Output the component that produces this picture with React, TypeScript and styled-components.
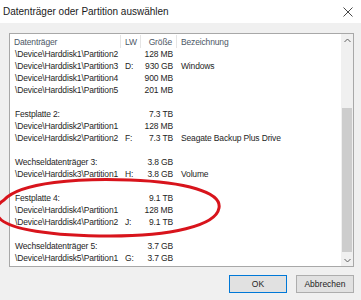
import styled, { createGlobalStyle } from "styled-components";

type Row = {
  name?: string;
  drive?: string;
  size?: string;
  label?: string;
};

const ROWS: Array<Row> = [
  { name: "\\Device\\Harddisk1\\Partition2", size: "128 MB" },
  { name: "\\Device\\Harddisk1\\Partition3", drive: "D:", size: "930 GB", label: "Windows" },
  { name: "\\Device\\Harddisk1\\Partition4", size: "900 MB" },
  { name: "\\Device\\Harddisk1\\Partition5", size: "201 MB" },
  {},
  { name: "Festplatte 2:", size: "7.3 TB" },
  { name: "\\Device\\Harddisk2\\Partition1", size: "128 MB" },
  { name: "\\Device\\Harddisk2\\Partition2", drive: "F:", size: "7.3 TB", label: "Seagate Backup Plus Drive" },
  {},
  { name: "Wechseldatenträger 3:", size: "3.8 GB" },
  { name: "\\Device\\Harddisk3\\Partition1", drive: "H:", size: "3.8 GB", label: "Volume" },
  {},
  { name: "Festplatte 4:", size: "9.1 TB" },
  { name: "\\Device\\Harddisk4\\Partition1", size: "128 MB" },
  { name: "\\Device\\Harddisk4\\Partition2", drive: "J:", size: "9.1 TB" },
  {},
  { name: "Wechseldatenträger 5:", size: "3.7 GB" },
  { name: "\\Device\\Harddisk5\\Partition1", drive: "G:", size: "3.7 GB" },
];

const GlobalStyle = createGlobalStyle`
  body {
    margin: 0;
    background: #f0f0f0;
    font-family: "Liberation Sans", Arial, sans-serif;
  }
`;

const App = () => {
  return (
    <>
      <GlobalStyle />
      <Window>
        <TitleBar>
          <Title>Datenträger oder Partition auswählen</Title>
          <CloseButton>
            <svg width="10" height="10" viewBox="0 0 10 10">
              <path d="M0.5 0.5 L9.5 9.5 M9.5 0.5 L0.5 9.5" stroke="#333" strokeWidth="0.9" />
            </svg>
          </CloseButton>
        </TitleBar>
        <Body>
          <ListBox>
            <ListContent>
              <HeaderRow>
                <HeaderCell>Datenträger</HeaderCell>
                <HeaderCell>LW</HeaderCell>
                <HeaderCell align="right">Größe</HeaderCell>
                <HeaderCell last>Bezeichnung</HeaderCell>
              </HeaderRow>
              {ROWS.map((row, index) => (
                <ListRow key={index}>
                  <NameCell>{row.name}</NameCell>
                  <DriveCell>{row.drive}</DriveCell>
                  <SizeCell>{row.size}</SizeCell>
                  <LabelCell>{row.label}</LabelCell>
                </ListRow>
              ))}
            </ListContent>
            <ScrollBar>
              <ScrollArrow>
                <svg width="7" height="5" viewBox="0 0 7 5">
                  <path d="M0.5 4 L3.5 1 L6.5 4" stroke="#606060" strokeWidth="1" fill="none" />
                </svg>
              </ScrollArrow>
              <ScrollTrack>
                <Thumb />
              </ScrollTrack>
              <ScrollArrow>
                <svg width="7" height="5" viewBox="0 0 7 5">
                  <path d="M0.5 1 L3.5 4 L6.5 1" stroke="#606060" strokeWidth="1" fill="none" />
                </svg>
              </ScrollArrow>
            </ScrollBar>
          </ListBox>
          <ButtonRow>
            <Button primary>OK</Button>
            <Button>Abbrechen</Button>
          </ButtonRow>
        </Body>
        <Annotation width="361" height="300" viewBox="0 0 361 300">
          <path
            d="M 4 200 C 20 182, 80 178, 130 180 C 185 182, 222 192, 219 208 C 216 226, 170 236, 110 236 C 55 236, 5 230, -2 216 C -6 208, -2 204, 4 200 Z"
            stroke="#d8141c"
            strokeWidth="3"
            fill="none"
          />
        </Annotation>
      </Window>
    </>
  );
};

export default App;

const Window = styled.div`
  position: relative;
  width: 361px;
  height: 300px;
  display: flex;
  flex-direction: column;
  background: #f0f0f0;
  overflow: hidden;
`;

const TitleBar = styled.div`
  height: 23px;
  display: flex;
  align-items: center;
  justify-content: space-between;
  padding: 0 8px 0 3px;
  background: #ffffff;
`;

const Title = styled.div`
  font-size: 10px;
  color: #1a1a1a;
`;

const CloseButton = styled.div`
  display: flex;
  align-items: center;
`;

const Body = styled.div`
  display: flex;
  flex-direction: column;
  padding: 10px 7px 0 9px;
`;

const ListBox = styled.div`
  height: 232px;
  display: flex;
  border: 1px solid #a8a8a8;
  background: #ffffff;
`;

const ListContent = styled.div`
  flex: 1;
  display: flex;
  flex-direction: column;
  padding-top: 1px;
  font-size: 8.5px;
  letter-spacing: -0.15px;
  color: #1e1e1e;
`;

const columns = "111px 20px 36px 1fr";

const HeaderRow = styled.div`
  display: grid;
  grid-template-columns: ${columns};
  height: 13px;
`;

const HeaderCell = styled.div<{ align?: string; last?: boolean }>`
  display: flex;
  align-items: center;
  justify-content: ${({ align }) => (align === "right" ? "flex-end" : "flex-start")};
  padding: ${({ align }) => (align === "right" ? "0 4px 0 0" : "0 0 0 4px")};
  border-right: ${({ last }) => (last ? "none" : "1px solid #e5e5e5")};
  color: #4c5766;
  white-space: nowrap;
`;

const ListRow = styled.div`
  display: grid;
  grid-template-columns: ${columns};
  height: 12px;
  align-items: center;
  white-space: nowrap;
`;

const NameCell = styled.div`
  padding-left: 5px;
`;

const DriveCell = styled.div`
  padding-left: 4px;
`;

const SizeCell = styled.div`
  text-align: right;
  padding-right: 4px;
`;

const LabelCell = styled.div`
  padding-left: 4px;
`;

const ScrollBar = styled.div`
  width: 12px;
  display: flex;
  flex-direction: column;
  background: #f0f0f0;
`;

const ScrollArrow = styled.div`
  height: 12px;
  display: flex;
  align-items: center;
  justify-content: center;
`;

const ScrollTrack = styled.div`
  flex: 1;
  display: flex;
  flex-direction: column;
`;

const Thumb = styled.div`
  margin: 62px 1px 0 1px;
  height: 144px;
  background: #cdcdcd;
`;

const ButtonRow = styled.div`
  display: flex;
  justify-content: flex-end;
  gap: 9px;
  margin-top: 8px;
`;

const Button = styled.div<{ primary?: boolean }>`
  width: 56px;
  height: 16px;
  display: flex;
  align-items: center;
  justify-content: center;
  font-size: 8.5px;
  color: #1e1e1e;
  background: #e1e1e1;
  border: 1px solid ${({ primary }) => (primary ? "#0078d7" : "#adadad")};
`;

const Annotation = styled.svg`
  position: absolute;
  left: 0;
  top: 0;
  pointer-events: none;
`;
